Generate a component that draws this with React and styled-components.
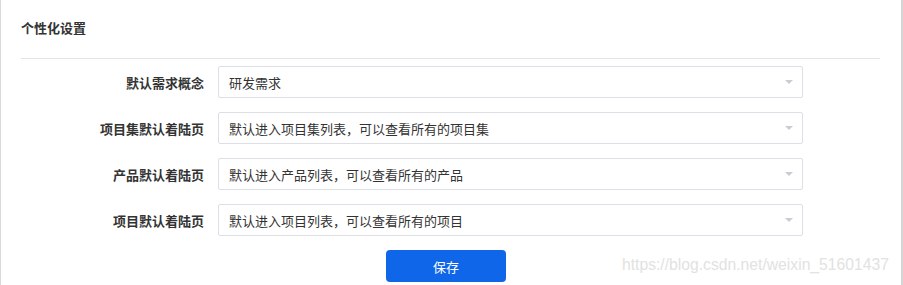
import React from "react";
import styled, { createGlobalStyle } from "styled-components";

const GlobalStyle = createGlobalStyle`
  html, body {
    margin: 0;
    padding: 0;
    background: #fff;
  }
  body {
    font-family: "Liberation Sans", "Noto Sans CJK SC", sans-serif;
    color: #333;
  }
`;

const settings = [
  { label: "默认需求概念", value: "研发需求" },
  { label: "项目集默认着陆页", value: "默认进入项目集列表，可以查看所有的项目集" },
  { label: "产品默认着陆页", value: "默认进入产品列表，可以查看所有的产品" },
  { label: "项目默认着陆页", value: "默认进入项目列表，可以查看所有的项目" },
];

const App = () => {
  return (
    <>
      <GlobalStyle />
      <Panel>
        <Header>个性化设置</Header>
        <Form>
          {settings.map((item) => (
            <Row key={item.label}>
              <Label>{item.label}</Label>
              <Select>
                <span>{item.value}</span>
                <Caret />
              </Select>
            </Row>
          ))}
          <Actions>
            <SaveButton type="button">保存</SaveButton>
          </Actions>
        </Form>
        <Watermark>https://blog.csdn.net/weixin_51601437</Watermark>
      </Panel>
    </>
  );
};

const Panel = styled.section`
  position: relative;
  box-sizing: border-box;
  width: 903px;
  height: 285px;
  padding: 0 21px 0 20px;
  border-left: 1px solid #d9d9d9;
  border-right: 2px solid #d4d4d4;
  overflow: hidden;
`;

const Header = styled.h3`
  margin: 0;
  box-sizing: border-box;
  height: 59px;
  line-height: 57px;
  font-size: 13px;
  font-weight: 700;
  color: #333;
  border-bottom: 1px solid #e4e4e4;
`;

const Form = styled.div`
  display: flex;
  flex-direction: column;
  gap: 14px;
  padding-top: 7px;
`;

const Row = styled.div`
  display: grid;
  grid-template-columns: 183px 585px;
  column-gap: 14px;
  align-items: center;
`;

const Label = styled.label`
  text-align: right;
  font-size: 13px;
  font-weight: 600;
  color: #333;
`;

const Select = styled.div`
  box-sizing: border-box;
  height: 32px;
  display: flex;
  align-items: center;
  justify-content: space-between;
  padding: 0 9px 0 10px;
  border: 1px solid #dcdfe6;
  border-radius: 2px;
  font-size: 13px;
  color: #333;
  background: #fff;
`;

const Caret = styled.i`
  width: 0;
  height: 0;
  border-left: 4px solid transparent;
  border-right: 4px solid transparent;
  border-top: 4px solid #c9ccd2;
`;

const Actions = styled.div`
  padding-left: 365px;
`;

const SaveButton = styled.button`
  width: 120px;
  height: 32px;
  border: none;
  border-radius: 4px;
  background: #0f66e9;
  color: #fff;
  font-family: "Liberation Sans", "Noto Sans CJK SC", sans-serif;
  font-size: 13px;
  cursor: pointer;
`;

const Watermark = styled.div`
  position: absolute;
  left: 621px;
  top: 256px;
  font-family: "Liberation Sans", sans-serif;
  font-size: 15.7px;
  color: #e2e2e2;
  white-space: nowrap;
  pointer-events: none;
`;

export default App;
